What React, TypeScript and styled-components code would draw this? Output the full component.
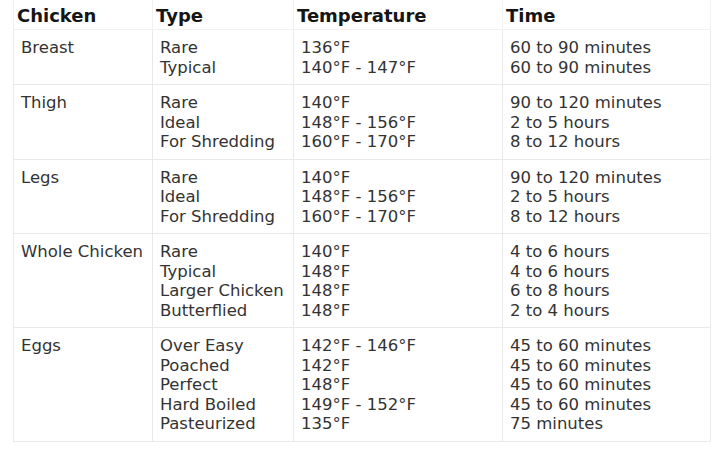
import React from "react";
import styled, { createGlobalStyle } from "styled-components";

const GlobalStyle = createGlobalStyle`
  html, body {
    margin: 0;
    padding: 0;
    background: #ffffff;
  }
  body {
    font-family: "DejaVu Sans", Verdana, sans-serif;
  }
`;

const Page = styled.div`
  width: 720px;
  height: 451px;
  padding: 0 0 0 13px;
  box-sizing: border-box;
  background: #ffffff;
  overflow: hidden;
`;

const Table = styled.table`
  width: 697px;
  table-layout: fixed;
  border-collapse: collapse;
  font-family: "DejaVu Sans", Verdana, sans-serif;
`;

const HeadCell = styled.th<{ $w: number }>`
  box-sizing: border-box;
  width: ${(p) => p.$w}px;
  text-align: left;
  font-size: 18px;
  font-weight: bold;
  color: #151515;
  line-height: 20px;
  padding: 6px 3px 3px 3px;
  border: 1px solid #f1f1f1;
  border-top: none;
  white-space: nowrap;
`;

const Cell = styled.td`
  box-sizing: border-box;
  vertical-align: top;
  font-size: 16.5px;
  line-height: 19.5px;
  color: #333333;
  padding: 8px 7px 7px 7px;
  border: 1px solid #e9e9e9;
  white-space: nowrap;
`;

const Line = styled.div`
  display: block;
`;

type Entry = [string, string, string];
type Group = { name: string; rows: Entry[] };

const groups: Group[] = [
  {
    name: "Breast",
    rows: [
      ["Rare", "136°F", "60 to 90 minutes"],
      ["Typical", "140°F - 147°F", "60 to 90 minutes"],
    ],
  },
  {
    name: "Thigh",
    rows: [
      ["Rare", "140°F", "90 to 120 minutes"],
      ["Ideal", "148°F - 156°F", "2 to 5 hours"],
      ["For Shredding", "160°F - 170°F", "8 to 12 hours"],
    ],
  },
  {
    name: "Legs",
    rows: [
      ["Rare", "140°F", "90 to 120 minutes"],
      ["Ideal", "148°F - 156°F", "2 to 5 hours"],
      ["For Shredding", "160°F - 170°F", "8 to 12 hours"],
    ],
  },
  {
    name: "Whole Chicken",
    rows: [
      ["Rare", "140°F", "4 to 6 hours"],
      ["Typical", "148°F", "4 to 6 hours"],
      ["Larger Chicken", "148°F", "6 to 8 hours"],
      ["Butterflied", "148°F", "2 to 4 hours"],
    ],
  },
  {
    name: "Eggs",
    rows: [
      ["Over Easy", "142°F - 146°F", "45 to 60 minutes"],
      ["Poached", "142°F", "45 to 60 minutes"],
      ["Perfect", "148°F", "45 to 60 minutes"],
      ["Hard Boiled", "149°F - 152°F", "45 to 60 minutes"],
      ["Pasteurized", "135°F", "75 minutes"],
    ],
  },
];

const columns: { label: string; w: number }[] = [
  { label: "Chicken", w: 139 },
  { label: "Type", w: 141 },
  { label: "Temperature", w: 209 },
  { label: "Time", w: 208 },
];

export default function App() {
  return (
    <>
      <GlobalStyle />
      <Page>
        <Table>
          <thead>
            <tr>
              {columns.map((c) => (
                <HeadCell key={c.label} $w={c.w}>
                  {c.label}
                </HeadCell>
              ))}
            </tr>
          </thead>
          <tbody>
            {groups.map((g) => (
              <tr key={g.name}>
                <Cell>{g.name}</Cell>
                <Cell>
                  {g.rows.map((r, i) => (
                    <Line key={i}>{r[0]}</Line>
                  ))}
                </Cell>
                <Cell>
                  {g.rows.map((r, i) => (
                    <Line key={i}>{r[1]}</Line>
                  ))}
                </Cell>
                <Cell>
                  {g.rows.map((r, i) => (
                    <Line key={i}>{r[2]}</Line>
                  ))}
                </Cell>
              </tr>
            ))}
          </tbody>
        </Table>
      </Page>
    </>
  );
}
